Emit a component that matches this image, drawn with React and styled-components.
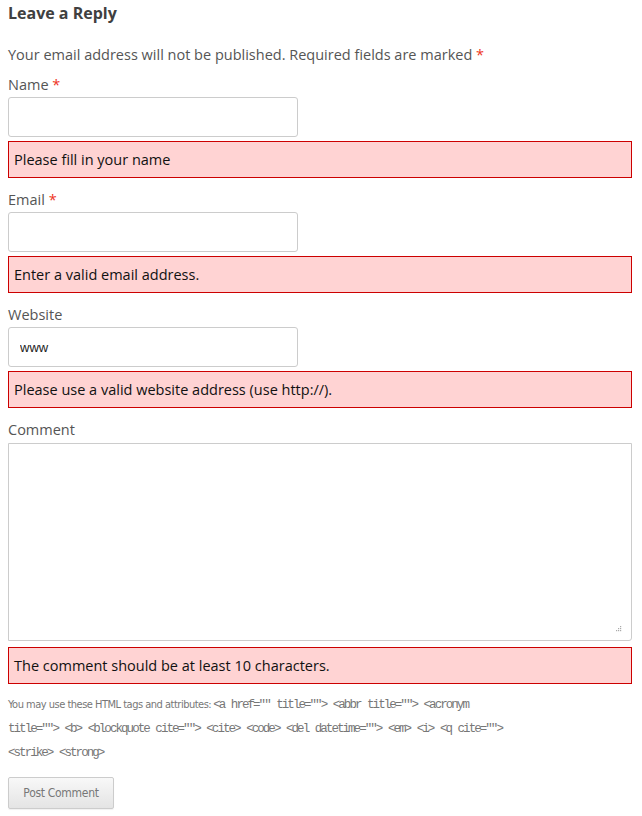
import React from "react";
import styled, { createGlobalStyle } from "styled-components";

const Global = createGlobalStyle`
  html, body { margin: 0; padding: 0; background: #fff; }
  body { font-family: "Open Sans", "Noto Sans", sans-serif; color: #404040; }
  * { box-sizing: border-box; }
`;

const Page = styled.div`
  width: 642px;
  padding: 0 10px 8px 8px;
`;

const Heading = styled.h3`
  margin: 0;
  font-size: 16px;
  line-height: 26px;
  font-weight: 700;
  color: #404040;
`;

const Notes = styled.p`
  margin: 18px 0 0;
  font-size: 14.5px;
  line-height: 22px;
  color: #555;
`;

const Req = styled.span`
  color: #e32;
`;

const Field = styled.div`
  display: flex;
  flex-direction: column;
  align-items: flex-start;
  margin-top: ${(p) => p.$top || 9}px;
`;

const Label = styled.label`
  font-size: 14.5px;
  line-height: 24px;
  padding-top: 1px;
  color: #555;
  margin-bottom: ${(p) => p.$gap || 0}px;
`;

const Input = styled.input`
  width: 290px;
  height: 40px;
  border: 1px solid #ccc;
  border-radius: 3px;
  padding: 0 11px;
  font-family: "Liberation Sans", Arial, sans-serif;
  font-size: 13px;
  color: #222;
  background: #fff;
  outline: none;
`;

const TextAreaWrap = styled.div`
  position: relative;
  width: 100%;
`;

const TextArea = styled.textarea`
  display: block;
  width: 100%;
  height: 198px;
  border: 1px solid #ccc;
  border-radius: 0 0 3px 0;
  resize: none;
  outline: none;
  background: #fff;
`;

const Grip = styled.svg`
  position: absolute;
  right: 10px;
  bottom: 9px;
`;

const ErrorBox = styled.div`
  width: 100%;
  height: 37px;
  margin-top: ${(p) => p.$top || 4}px;
  background: #ffd3d3;
  border: 1px solid #c00;
  padding: 0 5px;
  display: flex;
  align-items: center;
  font-size: 14.5px;
  color: #111;
`;

const Allowed = styled.p`
  margin: 9px 0 0;
  max-width: 515px;
  font-family: "DejaVu Sans Condensed", "Liberation Sans", sans-serif;
  font-stretch: condensed;
  font-size: 11px;
  letter-spacing: -0.5px;
  line-height: 24px;
  color: #777;
`;

const Code = styled.code`
  font-family: "Liberation Mono", "DejaVu Sans Mono", monospace;
  font-size: 12.5px;
  letter-spacing: -1.95px;
  word-spacing: 1px;
  margin-left: 2px;
`;

const Button = styled.button`
  margin-top: 12px;
  width: 106px;
  height: 32px;
  border: 1px solid #ccc;
  border-radius: 2px;
  background: linear-gradient(#f8f8f8, #e4e4e4);
  box-shadow: 0 1px 1px rgba(0, 0, 0, 0.06);
  font-family: "DejaVu Sans Condensed", "Liberation Sans", sans-serif;
  font-stretch: condensed;
  font-size: 12px;
  letter-spacing: -0.3px;
  color: #777;
  padding: 0;
`;

export default function App() {
  const tags =
    '<a href="" title=""> <abbr title=""> <acronym title=""> <b> <blockquote cite=""> <cite> <code> <del datetime=""> <em> <i> <q cite=""> <strike> <strong>';
  return (
    <Page>
      <Global />
      <Heading>Leave a Reply</Heading>
      <Notes>
        Your email address will not be published. Required fields are marked <Req>*</Req>
      </Notes>

      <Field $top={6}>
        <Label>
          Name <Req>*</Req>
        </Label>
        <Input type="text" />
        <ErrorBox>Please fill in your name</ErrorBox>
      </Field>

      <Field>
        <Label>
          Email <Req>*</Req>
        </Label>
        <Input type="text" />
        <ErrorBox>Enter a valid email address.</ErrorBox>
      </Field>

      <Field>
        <Label>Website</Label>
        <Input type="text" defaultValue="www" />
        <ErrorBox>Please use a valid website address (use http://).</ErrorBox>
      </Field>

      <Field>
        <Label $gap={1}>Comment</Label>
        <TextAreaWrap>
          <TextArea />
          <Grip width="6" height="6" viewBox="0 0 6 6">
            <rect x="4" y="0" width="1.2" height="1.2" fill="#aaa" />
            <rect x="2" y="2" width="1.2" height="1.2" fill="#aaa" />
            <rect x="4" y="2" width="1.2" height="1.2" fill="#aaa" />
            <rect x="0" y="4" width="1.2" height="1.2" fill="#aaa" />
            <rect x="2" y="4" width="1.2" height="1.2" fill="#aaa" />
            <rect x="4" y="4" width="1.2" height="1.2" fill="#aaa" />
          </Grip>
        </TextAreaWrap>
        <ErrorBox $top={6}>The comment should be at least 10 characters.</ErrorBox>
      </Field>

      <Allowed>
        You may use these HTML tags and attributes:<Code>{tags}</Code>
      </Allowed>
      <Button>Post Comment</Button>
    </Page>
  );
}
